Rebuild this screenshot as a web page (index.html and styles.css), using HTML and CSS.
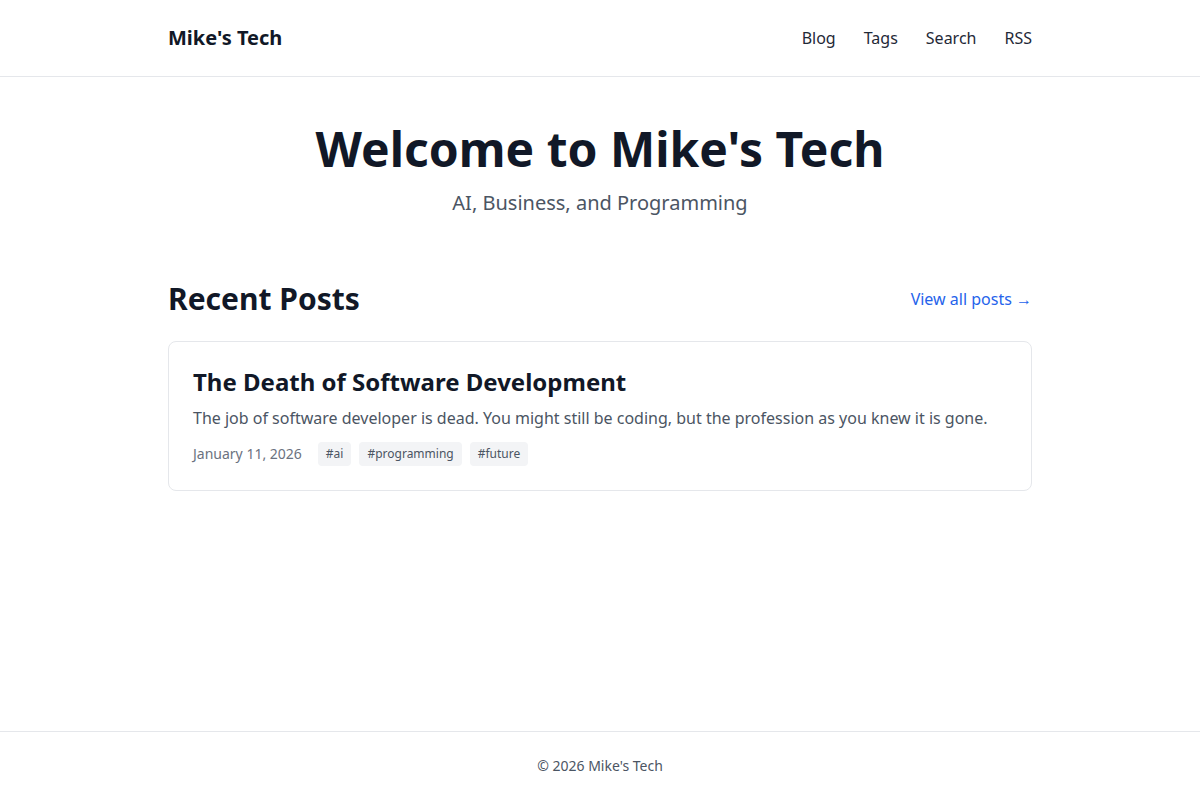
FILE: index.html
```html
<!DOCTYPE html>
<html lang="en">
<head>
  <meta charset="UTF-8" />
  <meta name="viewport" content="width=device-width, initial-scale=1.0"/>
  <title>Mike's Tech</title>
  <link rel="stylesheet" href="styles.css">
</head>
<body>

<header class="site-header">
  <div class="container header-inner">
    <a class="logo" href="#">Mike's Tech</a>
    <nav class="nav">
      <a href="#">Blog</a>
      <a href="#">Tags</a>
      <a href="#">Search</a>
      <a href="#">RSS</a>
    </nav>
  </div>
</header>

<main class="main">
  <div class="container">
    <section class="hero">
      <h1>Welcome to Mike's Tech</h1>
      <p>AI, Business, and Programming</p>
    </section>

    <section class="recent">
      <div class="recent-head">
        <h2>Recent Posts</h2>
        <a class="view-all" href="#">View all posts →</a>
      </div>

      <article class="post-card">
        <h3><a href="#">The Death of Software Development</a></h3>
        <p class="excerpt">The job of software developer is dead. You might still be coding, but the profession as you knew it is gone.</p>
        <div class="meta">
          <time>January 11, 2026</time>
          <div class="tags">
            <a class="tag" href="#">#ai</a>
            <a class="tag" href="#">#programming</a>
            <a class="tag" href="#">#future</a>
          </div>
        </div>
      </article>
    </section>
  </div>
</main>

<footer class="site-footer">
  <div class="container">
    <p>© 2026 Mike's Tech</p>
  </div>
</footer>

</body>
</html>
```

FILE: styles.css
```css
* {
  box-sizing: border-box;
}
body {
  margin: 0;
  font-family: 'Noto Sans', 'Open Sans', sans-serif;
  color: #111827;
  background: #fff;
  min-height: 100vh;
  display: flex;
  flex-direction: column;
}
a {
  text-decoration: none;
  color: inherit;
}
h1, h2, h3, p {
  margin: 0;
}
.container {
  max-width: 896px;
  margin: 0 auto;
  padding: 0 16px;
}
.site-header {
  border-bottom: 1px solid #e5e7eb;
}
.header-inner {
  display: flex;
  justify-content: space-between;
  align-items: center;
  padding-top: 24px;
  padding-bottom: 24px;
}
.logo {
  font-size: 20px;
  line-height: 28px;
  font-weight: 700;
  color: #111827;
}
.nav {
  display: flex;
  gap: 28px;
}
.nav a {
  font-size: 16px;
  line-height: 24px;
  color: #1f2937;
}
.main {
  flex: 1;
  padding: 48px 0;
}
.hero {
  text-align: center;
  margin-bottom: 64px;
}
.hero h1 {
  font-size: 48px;
  line-height: 48px;
  font-weight: 700;
  color: #111827;
}
.hero p {
  margin-top: 16px;
  font-size: 20px;
  line-height: 28px;
  color: #4b5563;
}
.recent-head {
  display: flex;
  justify-content: space-between;
  align-items: center;
  margin-bottom: 24px;
}
.recent-head h2 {
  font-size: 30px;
  line-height: 36px;
  font-weight: 700;
}
.view-all {
  color: #2563eb;
  font-size: 16px;
  line-height: 24px;
}
.post-card {
  border: 1px solid #e5e7eb;
  border-radius: 8px;
  padding: 24px;
}
.post-card h3 {
  font-size: 24px;
  line-height: 32px;
  font-weight: 700;
  color: #111827;
}
.excerpt {
  margin-top: 8px;
  font-size: 16px;
  line-height: 24px;
  color: #4b5563;
}
.meta {
  margin-top: 12px;
  display: flex;
  align-items: center;
  gap: 16px;
  font-size: 14px;
  line-height: 20px;
  color: #6b7280;
}
.tags {
  display: flex;
  gap: 8px;
}
.tag {
  background: #f3f4f6;
  color: #4b5563;
  font-size: 12px;
  line-height: 16px;
  padding: 4px 8px;
  border-radius: 4px;
}
.site-footer {
  border-top: 1px solid #e5e7eb;
  padding: 24px 0;
  text-align: center;
  font-size: 14px;
  line-height: 20px;
  color: #4b5563;
}
```
